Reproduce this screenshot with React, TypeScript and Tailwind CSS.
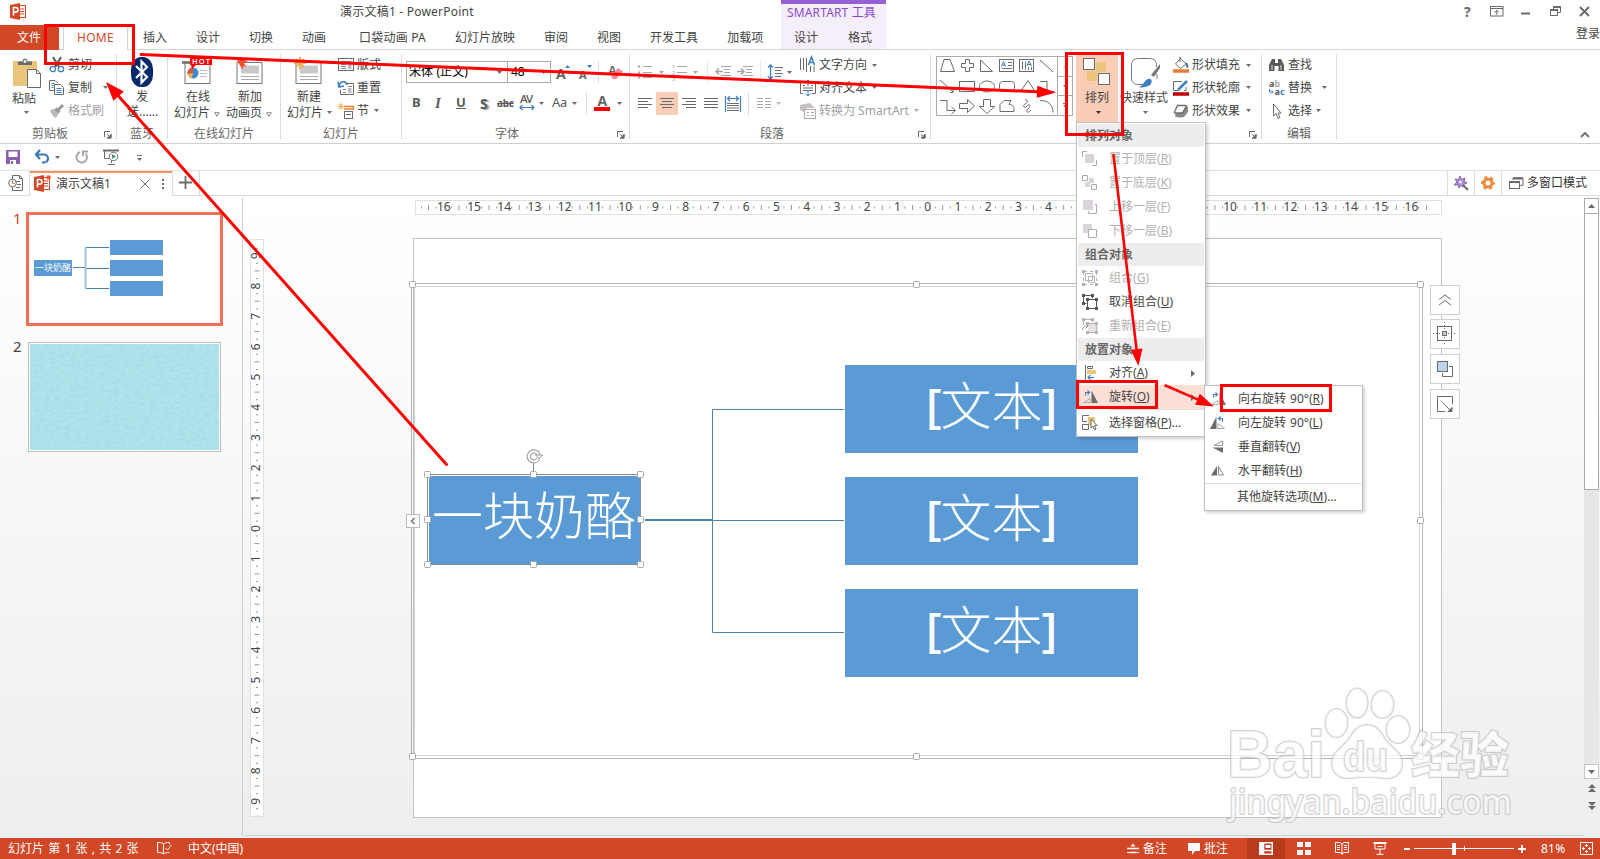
import React from "react";

type Kids = { children?: React.ReactNode };

const G = "#6b6b6b";
const BLUE = "#3f7fc1";

function Svg({ w = 16, h = 16, className = "", children }: { w?: number; h?: number; className?: string } & Kids) {
  return (
    <svg width={w} height={h} viewBox={`0 0 ${w} ${h}`} fill="none" stroke={G} strokeWidth={1} className={`shrink-0 overflow-visible ${className}`}>
      {children}
    </svg>
  );
}

function Caret({ className = "", color = "#6b6b6b" }: { className?: string; color?: string }) {
  return (
    <svg width="5" height="3" viewBox="0 0 5 3" className={`shrink-0 ${className}`}>
      <path d="M0 0h5L2.5 3z" fill={color} />
    </svg>
  );
}

function HollowCaret() {
  return (
    <svg width="6" height="5" viewBox="0 0 6 5" className="ml-1 mt-1 shrink-0">
      <path d="M.7.7h4.6L3 4.3z" fill="none" stroke="#6b6b6b" strokeWidth=".8" />
    </svg>
  );
}

/* ---------- title bar and tabs ---------- */

function PptLogo({ dot = false }: { dot?: boolean }) {
  return (
    <Svg w={17} h={17}>
      <rect x="8" y="2.5" width="7.5" height="12" fill="#fff" stroke="#d24726" />
      <path d="M10 6h4M10 8.5h4M10 11h4" stroke="#d24726" />
      <path d="M0 2l10-2v17L0 15z" fill="#d24726" stroke="none" />
      <path d="M3.5 12.5v-8h2.2a2.2 2.2 0 010 4.6H3.5" stroke="#fff" strokeWidth="1.6" />
      {dot && <circle cx="14.5" cy="2.5" r="2.3" fill="#ff5a1f" stroke="none" />}
    </Svg>
  );
}

function TitleArea() {
  const tab = "shrink-0 whitespace-nowrap leading-[26px]";
  return (
    <header className="flex h-[50px] shrink-0 border-b border-[#d4d4d4] text-[#444]">
      <div className="flex w-[781px] shrink-0 flex-col">
        <div className="flex h-[25px] items-center">
          <div className="ml-[10px] -mt-[2px] w-[330px]"><PptLogo /></div>
          <span className="-mt-[1px] whitespace-nowrap tracking-[0.22px]">演示文稿1 - PowerPoint</span>
        </div>
        <nav className="flex h-[24px]">
          <div className="h-[25px] w-[59px] bg-[#d24726] pl-[17px] leading-[26px] text-white">文件</div>
          <div className="ml-[4px] mr-[15px] h-[25px] w-[65px] border-x border-[#d4d4d4] bg-white pl-[13px] leading-[25px] tracking-[0.25px] text-[#d24726]">HOME</div>
          <span className={tab}>插入</span>
          <span className={`ml-[29px] ${tab}`}>设计</span>
          <span className={`ml-[29px] ${tab}`}>切换</span>
          <span className={`ml-[29px] ${tab}`}>动画</span>
          <span className={`ml-[33px] w-[67px] tracking-[0.2px] ${tab}`}>口袋动画 PA</span>
          <span className={`ml-[29px] ${tab}`}>幻灯片放映</span>
          <span className={`ml-[29px] ${tab}`}>审阅</span>
          <span className={`ml-[29px] ${tab}`}>视图</span>
          <span className={`ml-[29px] ${tab}`}>开发工具</span>
          <span className={`ml-[29px] ${tab}`}>加载项</span>
        </nav>
      </div>
      <div className="h-[49px] w-[105px] shrink-0 border-t-4 border-[#9460d6] bg-[#f5effc]">
        <div className="h-[21px] pl-[6px] leading-[18px] tracking-[0.15px] text-[#8c48cf]">SMARTART 工具</div>
        <div className="flex h-[24px] leading-[25px]">
          <span className="ml-[13px]">设计</span>
          <span className="ml-[30px]">格式</span>
        </div>
      </div>
      <div className="flex flex-1 flex-col items-end">
        <div className="flex h-[23px] items-center pr-[10px]">
          <span className="mr-[17px] w-[9px] text-[14px] font-bold leading-[22px] text-[#666]">?</span>
          <Svg w={14} h={11} className="mr-[17px]">
            <rect x=".5" y=".5" width="12.500" height="9.500" /><path d="M.5 2.500h12.500M6.800 9V4.500M4.500 6.500l2.300-2.200L9 6.500" />
          </Svg>
          <Svg w={10} h={10} className="mr-[19px]"><path d="M0 6.500h9" strokeWidth="2" /></Svg>
          <Svg w={11} h={11} className="mr-[18px]">
            <path d="M3.500 3V.5h7v6H8" /><path d="M3 1.200h8M0 4.200h8" strokeWidth="1.600" /><rect x=".5" y="3.500" width="7" height="6" />
          </Svg>
          <Svg w={11} h={11}><path d="M1 1l9 9M10 1l-9 9" strokeWidth="2" /></Svg>
        </div>
        <span className="leading-[22px]">登录</span>
      </div>
    </header>
  );
}

/* ---------- ribbon ---------- */

function Group({ className, label, labelClass = "", launcher = false, children }: { className: string; label?: string; labelClass?: string; launcher?: boolean } & Kids) {
  return (
    <section className={`flex h-[85px] shrink-0 flex-col border-r border-[#dcdcdc] ${className}`}>
      <div className="flex h-[73px]">{children}</div>
      <div className="flex h-[12px] items-center text-[#666]">
        <span className={`leading-[12px] pt-[2px] whitespace-nowrap ${labelClass}`}>{label}</span>
        {launcher && (
          <Svg w={8} h={8} className="ml-auto mr-[4px] mt-[3px]">
            <path d="M.5 6V.5H6M3 3l3 3M7 3v4H3" /><path d="M7 3.500V7H3.500z" fill={G} />
          </Svg>
        )}
      </div>
    </section>
  );
}

function Row({ icon, text, caret, gap = "ml-[5px]", dim = false, first = false }: { icon: React.ReactNode; text: string; caret?: boolean; gap?: string; dim?: boolean; first?: boolean }) {
  return (
    <div className={`flex items-center ${first ? "h-[22px]" : "h-[23px]"} ${dim ? "text-[#a0a0a0]" : ""}`}>
      <span className="flex w-[19px] shrink-0">{icon}</span>
      <span className="whitespace-nowrap leading-[20px]">{text}</span>
      {caret && <Caret className={gap} color={dim ? "#b0b0b0" : "#6b6b6b"} />}
    </div>
  );
}

function SlideIcon({ kind }: { kind: "hot" | "add" | "new" }) {
  return (
    <Svg w={30} h={28}>
      <rect x="2" y="5.500" width="25" height="21" fill="#fff" stroke="#777" />
      {kind !== "hot" && <><path d="M6 12.500h18" stroke="#c9c9c9" strokeWidth="8" /><path d="M6 19.500h18M6 22.500h18" stroke="#aaa" /></>}
      {kind === "hot" && (
        <>
          <path d="M-1 5.500h8" strokeWidth="2.500" />
          <circle cx="10" cy="16" r="5.500" fill="#3f8ac6" stroke="none" />
          <path d="M10 16V10.500A5.500 5.500 0 004.600 17z" fill="#e05436" stroke="none" />
          <path d="M10 16l-5.400 1a5.500 5.500 0 004 4.300z" fill="#f0b35a" stroke="none" />
          <path d="M17 13.500h7M17 16.500h7M17 19.500h7" stroke="#bbb" />
          <path d="M9 8h-1l1 4 4-4z" fill="#f00" stroke="none" />
          <rect x="7" y="0" width="22" height="8" fill="#f00" stroke="none" />
          <text x="18.500" y="6.800" textAnchor="middle" fontSize="7.500" fontWeight="600" letterSpacing="1.200" fill="#fff" stroke="none">HOT</text>
        </>
      )}
      {kind === "add" && <path d="M1 1l12 3-4 2 2 4-3-1 0 4-4-6z" fill="#f4502c" stroke="none" />}
      {kind === "new" && <path d="M6 0v12M0 6h12M2 2l8 8M10 2l-8 8" stroke="#efb45a" strokeWidth="2" />}
    </Svg>
  );
}

const grayLines = (ws: number[][]) => ws.map(([x1, x2], i) => <path key={i} d={`M${x1} ${i * 3 + 1.5}H${x2}`} stroke="#6b6b6b" />);

function Sep({ className = "" }: { className?: string }) {
  return <i className={`h-[22px] w-px shrink-0 bg-[#dcdcdc] ${className}`} />;
}

function ShapesGallery() {
  return (
    <div className="ml-[5px] mt-[2px] flex h-[60px] w-[137px] shrink-0 border border-[#ababab]">
      <div className="w-[121px] border-r border-[#ababab]">
        <Svg w={121} h={58}>
          <path d="M3.500 14.500L7 2.500h6l4.500 12zM28.500 2.500h4v4h4v4h-4v4h-4v-4h-4v-4h4zM43.500 3v11.500h12zM103 3l13 12" />
          <rect x="62.500" y="2.500" width="14" height="12" /><path d="M71 5.500h4M71 8.500h4M65 11.500h10" />
          <path d="M64.500 9.500l2-5 2 5M65 8h3" stroke={BLUE} />
          <rect x="82.500" y="2.500" width="14" height="12" /><path d="M85.500 4.500v8M88.500 4.500v8M91.500 10v3M94.500 10v3" />
          <path d="M90 9l2-5 2.500 5M91 7.500h3" stroke={BLUE} />
          <path d="M3 23l13 12M13 35.500h3v-4" />
          <rect x="22.500" y="24.500" width="15" height="10" /><ellipse cx="50" cy="29.500" rx="7.500" ry="5.500" /><rect x="62.500" y="24.500" width="15" height="10" rx="3" />
          <path d="M83.500 34.500L91 23.500l7 11zM103 24.500h7v10h7" />
          <path d="M3 43.500h7v10h8M14.500 50l4 3.500-4 3.500" />
          <path d="M22.500 46.500h8v-4l7 6.500-7 6.500v-4h-8zM46.500 42.500h7v7h4l-7.500 7-7.500-7h4zM63 54.500v-7l4-4h7l-2 4c5 0 5 3 5 7z" />
          <path d="M88 43c6 0 0 4-1 5s0 4 3 1 4 0 1 3 0 5 3 1M103 43.500c8 0 13 4 13 12" />
        </Svg>
      </div>
      <div className="flex flex-1 flex-col">
        <div className="flex flex-1 items-center justify-center border-b border-[#ababab]"><Caret className="rotate-180" color="#bbb" /></div>
        <div className="flex flex-1 items-center justify-center border-b border-[#ababab]"><Caret /></div>
        <div className="flex flex-1 flex-col items-center justify-center gap-[1px]"><i className="h-px w-[5px] bg-[#6b6b6b]" /><Caret /></div>
      </div>
    </div>
  );
}

function Ribbon() {
  return (
    <div className="flex h-[94px] shrink-0 border-b border-[#d0d0d0] pt-[4px] text-[#444]">
      <Group className="w-[117px]" label="剪贴板" labelClass="ml-[32px]" launcher>
        <div className="ml-[12px] flex w-[30px] flex-col">
          <Svg w={30} h={31} className="mt-[4px]">
            <path d="M1 3h24v25H1z" fill="#ecc57d" stroke="none" />
            <path d="M6 7V3.500h4.500C10.500-.5 15.500-.5 15.500 3.500H20V7z" fill="#6b6b6b" stroke="none" /><circle cx="13" cy="3.500" r="1.400" fill="#fff" stroke="none" />
            <path d="M15.500 11.500h9l4 4v14h-13z" fill="#fff" /><path d="M24.500 11.500v4h4" />
          </Svg>
          <span className="mt-[2px] leading-[16px]">粘贴</span>
          <Caret className="ml-[12px] mt-[4px]" />
        </div>
        <div className="ml-[7px] flex flex-col">
          <Row first text="剪切" icon={<Svg><path d="M4 0l6 10M12 0L6 10" stroke="#555" strokeWidth="2" /><circle cx="3.800" cy="12" r="2.700" stroke={BLUE} strokeWidth="1.300" /><circle cx="12" cy="12" r="2.700" stroke={BLUE} strokeWidth="1.300" /></Svg>} />
          <Row text="复制" caret gap="ml-[11px]" icon={<Svg><path d="M7 10.500H.5v-10H6L8.500 3" /><path d="M2.500 3.500h3M2.500 5.500h2M2.500 7.500h2" stroke={BLUE} /><path d="M5.500 4.500h6l3 3v7h-9z" fill="#fff" /><path d="M7.500 8.500h5M7.500 10.500h5M7.500 12.500h5" stroke={BLUE} /></Svg>} />
          <Row dim text="格式刷" icon={<Svg><path d="M1 7l5-1 4 4-3 5C5 14 2 11 1 7z" fill="#b9b9b9" stroke="none" /><path d="M6.500 5.500l4 4M9 7l5-5" stroke="#999" strokeWidth="3" /></Svg>} />
        </div>
      </Group>

      <Group className="w-[51px]" label="蓝牙" labelClass="ml-[13px]">
        <div className="ml-[10px] flex w-[38px] flex-col">
          <Svg w={22} h={30} className="ml-[4px] mt-[3px]">
            <rect width="22" height="30" rx="10" ry="12" fill="#03286b" stroke="none" />
            <path d="M5 9l11 11-5.500 5.500v-21L16 10 5 21" stroke="#fff" strokeWidth="2.200" />
          </Svg>
          <span className="mt-[2px] pl-[9px] leading-[16px]">发</span>
          <span className="whitespace-nowrap leading-[14px]">送......</span>
        </div>
      </Group>

      <Group className="w-[113px]" label="在线幻灯片" labelClass="ml-[26px]">
        <div className="ml-[6px] flex w-[52px] flex-col">
          <div className="ml-[9px] mt-[3px] h-[32px]"><SlideIcon kind="hot" /></div>
          <span className="pl-[12px] leading-[16px]">在线</span>
          <span className="flex items-center leading-[15px]">幻灯片<HollowCaret /></span>
        </div>
        <div className="flex w-[52px] flex-col">
          <div className="ml-[9px] mt-[3px] h-[32px]"><SlideIcon kind="add" /></div>
          <span className="pl-[12px] leading-[16px]">新加</span>
          <span className="flex items-center leading-[15px]">动画页<HollowCaret /></span>
        </div>
      </Group>

      <Group className="w-[121px]" label="幻灯片" labelClass="ml-[42px]">
        <div className="ml-[6px] flex w-[51px] flex-col">
          <div className="ml-[7px] mt-[3px] h-[32px]"><SlideIcon kind="new" /></div>
          <span className="pl-[10px] leading-[16px]">新建</span>
          <span className="flex items-center leading-[15px]">幻灯片<Caret className="ml-[4px]" /></span>
        </div>
        <div className="flex flex-col">
          <Row first text="版式" icon={<Svg><rect x=".5" y="1.500" width="15" height="12" /><path d="M3 4.500h10M3 7.500h5M3 9.500h5M3 11.500h5" stroke="#888" /><path d="M10 7h3.500v5H10z" fill="#bbb" stroke="none" /></Svg>} />
          <Row text="重置" icon={<Svg><path d="M8 3.500h7.500v11h-13V10" /><path d="M10 6.500h4M5 9.500h3M5 12.500h3" stroke="#888" /><path d="M10 8h3.500v5H10z" fill="#bbb" stroke="none" /><path d="M1 6.500C2 1 8 0 9 5M0 2l1 5 5-1" stroke={BLUE} strokeWidth="1.600" /></Svg>} />
          <Row text="节" caret icon={<Svg><path d="M3 0v7M0 3.500h7M1 1l4 5M5 1L1 6" stroke="#efb45a" /><path d="M6 3.500h9.500V6H6" stroke="#ef8236" strokeWidth="1.400" /><rect x="6.500" y="8.500" width="8" height="7" /><path d="M8 11.500h5" /></Svg>} />
        </div>
      </Group>

      <Group className="w-[228px]" label="字体" labelClass="ml-[93px]" launcher>
        <div className="flex flex-col">
          <div className="ml-[4px] mt-[7px] flex h-[22px] items-center">
            <div className="flex h-[22px] w-[102px] items-center border border-[#ababab] pl-[2px] leading-[20px] text-black"><span className="w-[88px] tracking-[0.1px]">宋体 (正文)</span><Caret /></div>
            <div className="-ml-px flex h-[22px] w-[44px] items-center border border-[#ababab] pl-[3px] text-[12px] leading-[20px] text-black"><span className="w-[30px]">48</span><Caret /></div>
            <Svg w={15} h={15} className="ml-[5px]"><text x="0" y="14" fontSize="14" fontWeight="bold" fill="#666" stroke="none">A</text><path d="M9 3l2.500-3L14 3z" fill={BLUE} stroke="none" /></Svg>
            <Svg w={15} h={15} className="ml-[7px]"><text x="1" y="14" fontSize="11" fontWeight="bold" fill="#666" stroke="none">A</text><path d="M9 0l2.500 3L14 0z" fill={BLUE} stroke="none" /></Svg>
            <Sep className="ml-[5px]" />
            <Svg w={15} h={17} className="ml-[9px]"><text x="0" y="11" fontSize="13" fontWeight="600" fill="#666" stroke="none">A</text><path d="M3 12l7-8 5 3.500-7 7.500-3 0z" fill="#f08a9b" stroke="none" /></Svg>
          </div>
          <div className="ml-[5px] mt-[9px] flex h-[22px] items-center text-[13px] text-[#5a5a5a]">
            <b className="w-[22px] pl-[5px]">B</b>
            <b className="w-[22px] pl-[6px] font-['Liberation_Serif'] text-[15px] italic">I</b>
            <b className="w-[22px] pl-[5px] underline">U</b>
            <b className="w-[24px] pl-[7px] text-[14px] [text-shadow:2px_1px_1px_#999]">S</b>
            <span className="w-[22px] text-[10px] font-bold tracking-tight line-through">abc</span>
            <Svg w={17} h={16}><text x="1" y="8" fontSize="11.500" fontWeight="500" fill="#555" stroke="none" textLength="13">AV</text><path d="M1 12.500h14M3.500 10L1 12.500 3.500 15M12.500 10l2.500 2.500-2.500 2.500" stroke={BLUE} strokeWidth="1.200" /></Svg>
            <Caret className="ml-[3px]" />
            <span className="ml-[8px] w-[20px] tracking-[-0.3px]">Aa</span>
            <Caret />
            <Sep className="ml-[9px]" />
            <Svg w={17} h={16} className="ml-[7px]"><text x="3.500" y="10.500" fontSize="14" fontWeight="bold" fill="#666" stroke="none">A</text><path d="M0 14h16" stroke="#f00" strokeWidth="4" /></Svg>
            <Caret className="ml-[6px]" />
          </div>
        </div>
      </Group>

      <Group className="w-[301px]" label="段落" labelClass="ml-[130px]" launcher>
        <div className="flex w-[170px] flex-col">
          <div className="ml-[8px] mt-[7px] flex h-[22px] items-center opacity-60">
            <Svg w={14} h={14}><path d="M0 1.500h2M0 7.500h2M0 12.500h2" strokeWidth="2" /><path d="M5 1.500h9M5 7.500h9M5 12.500h9" /></Svg>
            <Caret className="ml-[7px]" />
            <Svg w={15} h={16} className="ml-[8px]"><text x="0" y="5" fontSize="6" fill={G} stroke="none">1</text><text x="0" y="11" fontSize="6" fill={G} stroke="none">2</text><text x="0" y="17" fontSize="6" fill={G} stroke="none">3</text><path d="M5 2.500h10M5 8.500h10M5 13.500h10" /></Svg>
            <Caret className="ml-[6px]" />
            <Sep className="ml-[9px]" />
            <Svg w={16} h={12} className="ml-[7px]"><path d="M6 .5h10M9 3.500h6M9 6.500h6M6 9.500h10" /><path d="M1 5.500h7M4 2.500l-3 3 3 3" strokeWidth="1.600" /></Svg>
            <Svg w={16} h={12} className="ml-[6px]"><path d="M6 .5h10M9 3.500h6M9 6.500h6M6 9.500h10" /><path d="M0 5.500h7M4 2.500l3 3-3 3" strokeWidth="1.600" /></Svg>
            <Sep className="ml-[7px]" />
          </div>
          <div className="ml-[8px] mt-[9px] flex h-[23px] items-center">
            <Svg w={14} h={13}>{grayLines([[0, 14], [0, 10], [0, 14], [0, 10]])}</Svg>
            <span className="ml-[4px] flex h-[23px] w-[22px] items-center justify-center bg-[#fbcdb7]"><Svg w={14} h={13}>{grayLines([[0, 14], [2, 12], [0, 14], [2, 12]])}</Svg></span>
            <Svg w={14} h={13} className="ml-[4px]">{grayLines([[0, 14], [4, 14], [0, 14], [4, 14]])}</Svg>
            <Svg w={14} h={13} className="ml-[8px]">{grayLines([[0, 14], [0, 14], [0, 14], [0, 14]])}</Svg>
            <Svg w={16} h={16} className="ml-[7px]"><path d="M.5 0v16M15.500 0v16M2 2.500h12M5 0L2.500 2.500 5 5M11 0l2.500 2.500L11 5" stroke={BLUE} strokeWidth="1.200" /><path d="M2 7.500h12M2 9.500h12M2 12h12M2 14.500h12" /></Svg>
            <Sep className="ml-[7px]" />
            <Svg w={14} h={13} className="ml-[8px] opacity-60"><path d="M0 1.500h6M0 4.500h6M0 7.500h6M0 10.500h6M8 1.500h6M8 4.500h6M8 7.500h6M8 10.500h6" /></Svg>
            <Caret className="ml-[5px]" color="#bbb" />
          </div>
        </div>
        <div className="-ml-[32px] mt-[10px] flex h-[16px] items-center">
          <Svg w={15} h={16}><path d="M2.500 1v14M0 3.500L2.500 1 5 3.500M0 12.500L2.500 15 5 12.500" stroke={BLUE} strokeWidth="1.300" /><path d="M7 3.500h8M7 6.500h6M7 9.500h8M7 12.500h6" /></Svg>
          <Caret className="ml-[4px]" />
        </div>
        <div className="ml-[8px] flex flex-col">
          <Row first text="文字方向" caret icon={<Svg><path d="M.5 1v12M3.500 1v12M6.500 1v14M10.500 9v6M14 9v6" /><path d="M8.500 8L11.500 0l3 8M9.500 5.500h4" stroke={BLUE} strokeWidth="1.500" /></Svg>} />
          <Row text="对齐文本" caret icon={<Svg><path d="M3 2.500H.5v11H3M12 2.500h3.500v11H12M3 5.500h2M11 5.500h2M3 8h10M3 10.500h10" /><path d="M8 0v6M5.500 2.500L8 0l2.500 2.500M8 10v6M5.500 13.500L8 16l2.500-2.500" stroke={BLUE} /></Svg>} />
          <Row dim text="转换为 SmartArt" caret icon={<Svg><path d="M0 2l10-2 5 5H7l-3 4-4-2z" fill="#c4c0c4" stroke="none" /><rect x="4.500" y="6.500" width="11" height="9" fill="#fff" stroke="#aaa" /><path d="M7 9.500h2M11 9.500h3M7 12.500h2M11 12.500h3" stroke="#aaa" /></Svg>} />
        </div>
      </Group>

      <Group className="w-[331px]" launcher>
        <ShapesGallery />
        <div className="ml-[3px] flex h-[68px] w-[42px] flex-col bg-[#fbcdb7] pt-[4px]">
          <Svg w={28} h={28} className="ml-[7px]">
            <path d="M13 4h10v10H13zM4 13h10v10H4z" fill="#ecc57d" stroke="none" />
            <rect x=".5" y=".5" width="11" height="11" fill="#fff" /><rect x="15.500" y="15.500" width="11" height="11" fill="#fff" />
          </Svg>
          <span className="ml-[9px] mt-[4px] leading-[16px]">排列</span>
          <Caret className="ml-[20px] mt-[5px]" color="#333" />
        </div>
        <div className="ml-[2px] flex w-[50px] flex-col pt-[4px]">
          <Svg w={30} h={30} className="ml-[11px]">
            <path d="M14 26.500H6.500a6 6 0 01-6-6v-14a6 6 0 016-6h13a6 6 0 016 6V9M26 16v5" stroke="#777" />
            <path d="M29 6L20 17l3 2 6-9z" fill="#777" stroke="none" /><path d="M7 29c5 0 6-7 10-8 4-1 5 3 2 6-3 2-8 3-12 2z" fill={BLUE} stroke="none" />
          </Svg>
          <span className="mt-[2px] whitespace-nowrap leading-[16px]">快速样式</span>
          <Caret className="ml-[23px] mt-[5px]" />
        </div>
        <div className="ml-[3px] flex flex-col">
          <Row first text="形状填充" caret gap="ml-[6px]" icon={<Svg><path d="M7 2L2.500 7l5 4.500L13 7 7 1V0v5" fill="#fff" /><path d="M13 5c2 2 3 3 2 6-2 0-2-2-2-6z" fill={BLUE} stroke="none" /><path d="M0 14h16" stroke="#ed7d31" strokeWidth="3.500" /></Svg>} />
          <Row text="形状轮廓" caret gap="ml-[6px]" icon={<Svg><path d="M9 1.500H.5v9h5M13 7v3.500h-2" /><path d="M5 10l9-9" stroke={BLUE} strokeWidth="2.500" /><path d="M0 14h16" stroke="#c00000" strokeWidth="3.500" /></Svg>} />
          <Row text="形状效果" caret gap="ml-[6px]" icon={<Svg><path d="M4 3h9.500q1.500 0 1.500 2v4l-4 5q-5 1-9-.5z" fill="#888" stroke="none" /><path d="M4.500 2.500h8q1 0 .5 1L9.500 10H2q-1 0-.5-1z" fill="#fff" strokeWidth="1.300" /></Svg>} />
        </div>
      </Group>

      <Group className="w-[75px]" label="编辑" labelClass="ml-[25px]">
        <div className="ml-[7px] flex flex-col">
          <Row first text="查找" icon={<Svg><path d="M0 14V8l3-6h3v4h3V2h3l3 6v6H9.500V9h-4v5z" fill="#5a5a5a" stroke="none" /><path d="M3 8v5M12 8v5" stroke="#ddd" /></Svg>} />
          <Row text="替换" caret gap="ml-[10px]" icon={<Svg><text x="0" y="7" fontSize="9" fontWeight="bold" fill="#555" stroke="none">a<tspan fill="#aaa">b</tspan></text><text x="5.500" y="15" fontSize="9" fontWeight="bold" fill="#555" stroke="none">a<tspan fill={BLUE}>c</tspan></text><path d="M.5 9v3h3M2.500 10.500L4 12l-1.500 1.500" stroke={BLUE} /></Svg>} />
          <Row text="选择" caret gap="ml-[4px]" icon={<Svg><path d="M4.500 1v12l2.500-2.500 2 5 2-1-2-4.500h3z" fill="#fff" /></Svg>} />
        </div>
      </Group>
      <div className="flex flex-1 items-end justify-end pb-[5px] pr-[10px]">
        <Svg w={10} h={6}><path d="M1 5l4-4 4 4" strokeWidth="1.800" /></Svg>
      </div>
    </div>
  );
}

/* ---------- quick access and document tabs ---------- */

function QuickAccess() {
  return (
    <div className="flex h-[27px] shrink-0 items-center border-b border-[#e0e0e0]">
      <Svg w={14} h={14} className="ml-[6px]"><path d="M0 0h14v14H0z" fill="#8a5fb0" stroke="none" /><path d="M2.500 1.500h9V7h-9zM4 10h6v4H4z" fill="#fff" stroke="none" /><path d="M5 11h2v3H5z" fill="#8a5fb0" stroke="none" /></Svg>
      <Svg w={15} h={14} className="ml-[15px]"><path d="M5 0L1 4.500 5 9M1 4.500h8a4 4 0 010 8H7" stroke="#3b78b8" strokeWidth="2.200" /></Svg>
      <Caret className="ml-[5px]" />
      <Svg w={14} h={14} className="ml-[15px]"><path d="M5 2.200a5.300 5.300 0 105.500 1.300M8 6V1.500h5" stroke="#a6a6a6" strokeWidth="1.900" /></Svg>
      <Svg w={17} h={16} className="ml-[14px]"><path d="M0 1.500h16" strokeWidth="2" /><path d="M1.500 2v7.500H6M8.500 10v4M5 15.500h7" /><circle cx="10.500" cy="7.500" r="4.300" fill="#fff" /><path d="M9 5l4 2.500L9 10z" fill="#3f9c76" stroke="none" /></Svg>
      <div className="ml-[17px] mt-[2px] flex flex-col gap-[2px]"><i className="h-px w-[5px] bg-[#6b6b6b]" /><Caret /></div>
    </div>
  );
}

function DocTabs() {
  return (
    <div className="flex h-[25px] shrink-0 text-[#444]">
      <div className="flex w-[30px] items-center border-b border-r border-[#dcdcdc] pl-[8px]">
        <Svg w={16} h={16}><path d="M4.500 4V.5h7l3 3v12h-10V12" fill="#fff" /><path d="M11.500.5v3h3M8 6.500h4M9 9.500h4M8 12.500h4" /><circle cx="4.500" cy="8" r="3.800" fill="#fff" /><path d="M4.500 5.500V8.500h2" stroke="#e0703c" /></Svg>
      </div>
      <div className="flex w-[142px] items-center border-t-2 border-[#f09468] pb-[2px] pl-[4px]">
        <PptLogo dot />
        <span className="ml-[5px] w-[84px] leading-[20px]">演示文稿1</span>
        <Svg w={10} h={10}><path d="M.5.500l9 9M9.500.500l-9 9" /></Svg>
        <Svg w={4} h={12} className="ml-[11px]"><path d="M2 1v2M2 5v2M2 9v2" strokeWidth="2" /></Svg>
      </div>
      <div className="flex w-[28px] items-center border-x border-b border-[#dcdcdc] pb-[1px] pl-[6px]"><Svg w={13} h={13}><path d="M6.500 0v13M0 6.500h13" strokeWidth="1.800" /></Svg></div>
      <div className="flex flex-1 items-center justify-end border-b border-[#dcdcdc]">
        <div className="flex h-[24px] w-[27px] items-center justify-center border-l border-[#dcdcdc] pr-[1px]">
          <Svg><path d="M7 1l1.500 3.500L12 3l-1 3.500L14 8l-3.500 1.500L11 12 8 10.500 6 13l-.5-3L1 10l3-3-2-3 3.500.5z" fill="#b48ae0" stroke="#7d6a98" /><circle cx="7.500" cy="7" r="1.500" fill="#eee" stroke="none" /><path d="M10 10l5 5" strokeWidth="2" /></Svg>
        </div>
        <div className="flex h-[24px] w-[27px] items-center justify-center border-l border-[#dcdcdc]">
          <Svg w={14} h={14}><circle cx="7" cy="7" r="4" stroke="#ee8a3c" strokeWidth="3" /><circle cx="7" cy="7" r="6" stroke="#ee8a3c" strokeWidth="2" strokeDasharray="3.140 3.140" strokeDashoffset="1.500" /></Svg>
        </div>
        <div className="flex h-[24px] w-[99px] items-center border-l border-[#dcdcdc] pl-[7px]">
          <Svg w={15} h={13}><path d="M4 3V.8h10v7.500h-3" /><path d="M4 1.500h10" strokeWidth="2" /><rect x=".5" y="4.500" width="10" height="7" /><path d="M0 5h11" strokeWidth="2" /></Svg>
          <span className="ml-[3px] leading-[20px] text-[#333]">多窗口模式</span>
        </div>
      </div>
    </div>
  );
}

/* ---------- workspace ---------- */

function Thumbnails() {
  return (
    <aside className="mt-[2px] flex h-[638px] w-[243px] shrink-0 flex-col border-r border-[#cfcfcf] pt-[14px]">
      <div className="flex h-[130px]">
        <span className="w-[26px] pl-[13px] text-[15px] leading-[13px] text-[#d24726]">1</span>
        <div className="h-[114px] w-[197px] border-[3px] border-[#f07055] bg-white">
          <div className="flex h-full pl-[5px] pt-[25px]">
            <div className="mt-[20px] flex h-[16px] w-[38px] items-center justify-center bg-[#5b9bd5] text-[9px] leading-[14px] text-white">一块奶酪</div>
            <Svg w={38} h={56}><path d="M1 27.500h12M13 7.500h24M13 28.500h24M13 48.500h24" stroke="#4a80b0" /><path d="M13.500 7v42" stroke="#a9c0dc" strokeWidth="2" /></Svg>
            <div className="flex flex-col gap-[5px]">
              <i className="h-[15px] w-[53px] bg-[#5b9bd5]" /><i className="h-[16px] w-[53px] bg-[#5b9bd5]" /><i className="h-[15px] w-[53px] bg-[#5b9bd5]" />
            </div>
          </div>
        </div>
      </div>
      <div className="flex">
        <span className="w-[28px] pl-[13px] text-[15px] leading-[8px] text-[#444]">2</span>
        <div className="h-[110px] w-[193px] border border-[#bfbfbf] bg-white p-[1px]">
          <svg width="189" height="106">
            <filter id="weave"><feTurbulence type="fractalNoise" baseFrequency="0.2 0.35" numOctaves="2" seed="4" /><feColorMatrix values="0 0 0 0 0.35  0 0 0 0 0.68  0 0 0 0 0.78  1.500 0 0 0 -0.560" /></filter>
            <rect width="189" height="106" fill="#b0e4ea" /><rect width="189" height="106" filter="url(#weave)" />
          </svg>
        </div>
      </div>
    </aside>
  );
}

function HRuler() {
  const marks = Array.from({ length: 33 }, (_, i) => i - 16);
  return (
    <svg width="1027" height="15" className="ml-[172px] mt-[4px] shrink-0 border border-[#e0e0e0] bg-white">
      {marks.map((m) => {
        const x = 511.600 + m * 30.240;
        return (
          <g key={m}>
            <text x={x} y="10.300" textAnchor="middle" fontSize="12" fill="#444">{Math.abs(m)}</text>
            <path d={`M${x - 7.500} 5.500v2M${x + 7.500} 5.500v2M${x + 15.100} 4v5`} stroke="#999" />
          </g>
        );
      })}
      <path d="M12.500 4v5M5.500 5.500v2" stroke="#999" />
    </svg>
  );
}

function VRuler() {
  const marks = Array.from({ length: 19 }, (_, i) => i - 9);
  return (
    <svg width="14" height="578" className="ml-[7px] mt-[24px] shrink-0 border border-[#e0e0e0] bg-white">
      {marks.map((m) => {
        const y = 288.500 + m * 30.300;
        return (
          <g key={m}>
            <text transform={`translate(9 ${y}) rotate(-90)`} textAnchor="middle" fontSize="12" fill="#444">{Math.abs(m)}</text>
            <path d={`M5 ${y - 7.500}h2M5 ${y + 7.500}h2M3.500 ${y + 15.100}h5`} stroke="#999" />
          </g>
        );
      })}
    </svg>
  );
}

function Handle({ x, y }: { x: number; y: number }) {
  return <rect x={x - 3} y={y - 3} width="6" height="6" rx="1" fill="#fff" stroke="#a8a8a8" />;
}

function TextNode({ className }: { className: string }) {
  return (
    <div className={`absolute left-[431px] flex h-[88px] w-[293px] justify-center bg-[#5b9bd5] text-[51px] font-light leading-[80px] text-white ${className}`}>
      <span className="-mr-[1px] text-[48px] font-medium">[</span><span>文本</span><span className="-ml-[1px] text-[48px] font-medium">]</span>
    </div>
  );
}

function Slide() {
  const btn = "absolute left-[1016px] flex size-[30px] items-center justify-center border border-[#d0d0d0] bg-white";
  return (
    <div className="relative ml-[149px] mt-[23px] h-[580px] w-[1029px] shrink-0 border border-[#c3c3c3] bg-white">
      <TextNode className="top-[126px]" />
      <TextNode className="top-[238px]" />
      <TextNode className="top-[350px]" />
      <div className="absolute left-[15px] top-[237px] h-[88px] w-[212px] bg-[#5b9bd5] pl-[3px] text-[51px] font-light leading-[78px] text-white"><span className="whitespace-nowrap">一块奶酪</span></div>
      <svg width="1040" height="560" viewBox="400 230 1040 560" fill="none" className="absolute -left-[14px] -top-[9px]">
        <path d="M645 520h67" stroke="#4a80b4" strokeWidth="2" />
        <path d="M844 409.500H712.500v223H844M712 520.500h132" stroke="#4a80b4" />
        <rect x="411.500" y="283.500" width="1011" height="475" stroke="#b4b4b4" />
        <rect x="414.500" y="286.500" width="1005" height="469" stroke="#d0d0d0" />
        <Handle x={412.500} y={284.500} /><Handle x={916.500} y={284.500} /><Handle x={1420.500} y={284.500} /><Handle x={1420.500} y={520.500} />
        <Handle x={412.500} y={756.500} /><Handle x={916.500} y={756.500} /><Handle x={1420.500} y={756.500} />
        <rect x="406.500" y="514.500" width="13" height="13" fill="#fff" stroke="#bbb" />
        <path d="M414.500 518l-3 3 3 3" stroke="#777" strokeWidth="1.500" />
        <rect x="427.500" y="474.500" width="213" height="90" stroke="#8c8c8c" />
        <path d="M533.500 462v13" stroke="#888" />
        <path d="M538 459a5 5 0 11.500-4" stroke="#999" strokeWidth="4.200" /><path d="M538 459a5 5 0 11.500-4" stroke="#fff" strokeWidth="2.200" />
        <path d="M535.500 455h7l-3.500 4z" fill="#fff" stroke="#999" />
        {[427.500, 533.500, 640.500].map((x) => [474.500, 519.500, 564.500].map((y) => (x === 533.500 && y === 519.500 ? null : <Handle key={`${x}${y}`} x={x} y={y} />)))}
      </svg>
      <div className={`${btn} top-[46px]`}><Svg w={14} h={12}><path d="M1 5.500L7 1l6 4.500M1 11l6-4.500L13 11" /></Svg></div>
      <div className={`${btn} top-[80px]`}><Svg w={24} h={24}><rect x="4.500" y="4.500" width="14" height="14" /><rect x="9.500" y="9.500" width="4" height="4" fill="#ccc" /><path d="M11.500 0v9M11.500 15v9M0 11.500h9M15 11.500h9" strokeDasharray="1 2" /></Svg></div>
      <div className={`${btn} top-[115px]`}><Svg><rect x=".5" y=".5" width="10" height="10" fill="#bdd3ec" /><path d="M12 5.500h3.500v10h-10V12" /></Svg></div>
      <div className={`${btn} top-[150px]`}><Svg><path d="M8 15.500H.5V.5h15V8M5 6l8 8" /><path d="M15 11.500V15.500H11z" fill={G} /></Svg></div>
    </div>
  );
}

function ScrollBar() {
  return (
    <div className="mt-[2px] flex w-[15px] shrink-0 flex-col items-center">
      <div className="flex h-[16px] w-[15px] shrink-0 items-center justify-center border border-[#ababab] bg-white"><Svg w={7} h={4}><path d="M0 4h7L3.500 0z" fill={G} stroke="none" /></Svg></div>
      <div className="-mt-px h-[277px] w-[15px] shrink-0 border border-[#ababab] bg-white" />
      <div className="h-[274px] w-[15px] shrink-0 bg-[#e6e6e6]" />
      <div className="flex h-[15px] w-[15px] shrink-0 items-center justify-center border border-[#c6c6c6] bg-white"><Svg w={7} h={4}><path d="M0 0h7L3.500 4z" fill={G} stroke="none" /></Svg></div>
      <Svg w={8} h={9} className="mt-[5px]"><path d="M0 4h8L4 0zM0 8h8L4 4z" fill={G} stroke="none" /></Svg>
      <Svg w={8} h={9} className="mt-[9px]"><path d="M0 0h8L4 4zM0 4h8L4 8z" fill={G} stroke="none" /></Svg>
    </div>
  );
}

function Workspace() {
  return (
    <main className="flex h-[642px] shrink-0 bg-gradient-to-b from-white to-[#eeeeee]">
      <Thumbnails />
      <div className="flex w-[1341px] shrink-0 flex-col">
        <HRuler />
        <div className="flex h-[620px] shrink-0"><VRuler /><Slide /></div>
        <div className="ml-[2px] h-px bg-[#cfcfcf]" />
      </div>
      <ScrollBar />
    </main>
  );
}

function StatusBar() {
  return (
    <footer className="flex h-[21px] shrink-0 items-center bg-[#d24726] text-white">
      <span className="ml-[8px] w-[149px] whitespace-nowrap leading-[20px] [word-spacing:1.1px]">幻灯片 第 1 张 , 共 2 张</span>
      <Svg w={15} h={13}><path d="M6.500 12V2C5 .5 2.500.5.500.500v10c2 0 4.500 0 6 1.500 1-1 3-1.500 6-1.500M6.500 2C8 .5 10 .5 12.500.500v2M8.500 6l2 2 4-5" stroke="#fff" /></Svg>
      <span className="ml-[16px] leading-[20px]">中文(中国)</span>
      <div className="ml-auto flex h-[21px] items-center">
        <Svg w={12} h={11}><path d="M0 5.500h12M3 9.500h6" stroke="#fff" strokeWidth="1.300" /><path d="M0 9.500h12" stroke="#fff" /><path d="M3.500 3.500l2.500-3 2.500 3z" fill="#fff" stroke="none" /></Svg>
        <span className="ml-[4px] mr-[21px] leading-[20px]">备注</span>
        <Svg w={12} h={12}><path d="M0 0h12v8H7l-3 4V8H0z" fill="#fff" stroke="none" /></Svg>
        <span className="ml-[4px] mr-[19px] leading-[20px]">批注</span>
        <div className="flex h-[21px] w-[38px] items-center justify-center bg-[#b83b1d]">
          <Svg w={14} h={13}><path d="M.8.800h12.400v11.400H.8zM4.500 1v11M4.500 8.500H13" stroke="#fff" strokeWidth="1.500" /><path d="M1 1h3v11H1zM6.500 3h5v3h-5z" fill="#fff" stroke="none" /></Svg>
        </div>
        <Svg w={14} h={13} className="ml-[12px]"><path d="M0 0h6v5H0zM8 0h6v5H8zM0 8h6v5H0zM8 8h6v5H8z" fill="#fff" stroke="none" /></Svg>
        <Svg w={14} h={13} className="ml-[24px]"><path d="M7 1.500v11M.5.500H5L7 2 9 .5h4.500v10H9L7 12 5 10.500H.5zM2 3.500h3M2 5.500h3M2 7.500h3M9 3.500h3M9 5.500h3M9 7.500h3" stroke="#fff" /></Svg>
        <Svg w={14} h={13} className="ml-[24px]"><path d="M.5 1h13" stroke="#fff" strokeWidth="2" /><path d="M2 1.500v5.500h10V1.500M7 7v5M3.500 12.300h7M4.500 4.500h5" stroke="#fff" /></Svg>
        <i className="ml-[17px] h-[2px] w-[6px] bg-white" />
        <div className="ml-[4px] flex w-[100px] items-center">
          <i className="h-px w-[38px] bg-white" /><i className="h-[12px] w-[4px] bg-white" /><i className="h-px w-[8px] bg-white" /><i className="h-[5px] w-px bg-white" /><i className="h-px w-[49px] bg-white" />
        </div>
        <Svg w={8} h={8} className="ml-[4px]"><path d="M4 0v8M0 4h8" stroke="#fff" strokeWidth="2" /></Svg>
        <span className="ml-[15px] w-[39px] leading-[20px] tracking-[0.2px]">81%</span>
        <Svg w={13} h={13} className="mr-[7px]"><path d="M.5.500h12v12H.5z" stroke="#fff" /><path d="M6.500 2v3M6.500 8v3M2 6.500h3M8 6.500h3M5 3.500h3M5 9.500h3M3.500 5v3M9.500 5v3" stroke="#fff" /></Svg>
      </div>
    </footer>
  );
}

/* ---------- menus ---------- */

function MenuHead({ children }: Kids) {
  return <div className="mx-px h-[23px] bg-[#ededed] pl-[7px] font-bold leading-[24px] text-[#666]">{children}</div>;
}

function MenuItem({ icon, text, k, tail = "", dim, sub, hot, h = "h-[24px]" }: { icon: React.ReactNode; text: string; k: string; tail?: string; dim?: boolean; sub?: boolean; hot?: boolean; h?: string }) {
  return (
    <div className={`flex items-center ${h} ${hot ? "bg-[#fce0d8]" : ""} ${dim ? "text-[#b1b1b1]" : "text-[#444]"}`}>
      <span className="ml-[5px] w-[27px] shrink-0">{icon}</span>
      <span className="whitespace-nowrap leading-[20px]">{text}(<u>{k}</u>){tail}</span>
      {sub && <Svg w={4} h={7} className="ml-auto mr-[10px]"><path d="M0 0v7l4-3.500z" fill={G} stroke="none" /></Svg>}
    </div>
  );
}

const Squares = ({ v }: { v: number }) => (
  <Svg>
    {v === 0 && <><path d="M5 .5H.5V6M10 14.500h4.500V9" stroke="#aaa" /><path d="M3 3h9v9H3z" fill="#d9d4d9" stroke="none" /></>}
    {v === 1 && <><path d="M3 7h5v5H3zM7 3h5v5H7z" fill="#d9d4d9" stroke="none" /><path d="M.5.500h5v5h-5zM9.500 9.500h5v5h-5z" fill="#fff" stroke="#aaa" /></>}
    {v === 2 && <><path d="M1 1h10v10H1z" fill="#d9d4d9" stroke="none" /><path d="M12.500 5.500h2v9h-8V12" stroke="#aaa" /></>}
    {v === 3 && <><path d="M1 1h9v9H1z" fill="#d9d4d9" stroke="none" /><path d="M6.500 6.500h8v8h-8z" fill="#fff" stroke="#aaa" /></>}
  </Svg>
);

const GroupIcon = ({ v }: { v: number }) => {
  const c = v === 1 ? "#555" : "#b5b0b5";
  return (
    <Svg>
      {v === 0 && <><path d="M2 1.500h12M2 14.500h12M1.500 2v12M14.500 2v12" stroke={c} strokeDasharray="3 3" /><path d="M3.500 3.500h7v7h-7zM6.500 6.500h6v6h-6z" stroke={c} /><path d="M0 0h3v3H0zM13 0h3v3h-3zM0 13h3v3H0zM13 13h3v3h-3z" fill={c} stroke="none" /></>}
      {v > 0 && <><path d="M1.500 1.500h9v3M1.500 1.500v8h3" stroke={c} /><path d="M5.500 5.500h9v9h-9z" fill={v === 2 ? "#e4e0e4" : "#fff"} stroke={c} /><path d="M0 0h3v3H0zM9 0h3v3H9zM0 8h3v3H0zM4 4h3v3H4zM13 4h3v3h-3zM4 13h3v3H4zM13 13h3v3h-3z" fill={c} stroke="none" /></>}
      {v === 2 && <><path d="M0 7h6v6H0z" fill="#fff" stroke="none" /><path d="M.5 12c0-3 2-4 5-4M3.500 5.500L6 8l-2.500 2.500" stroke="#999" /></>}
    </Svg>
  );
};

const RotIcon = ({ v }: { v: "r" | "l" | "v" | "h" }) => (
  <Svg>
    {v === "r" && <><path d="M9.500 1.500V14h6.500z" fill="#6b6b6b" stroke="none" /><path d="M1.500 13.500H8V9.500z" stroke="#aaa" /><path d="M3.500 6.500V3.500H7M5.500 1.500l2 2-2 2" stroke={BLUE} strokeWidth="1.100" /></>}
    {v === "l" && <><path d="M6.500 1.500V14H0z" fill="#6b6b6b" stroke="none" /><path d="M14.500 13.500H8V8.500z" stroke="#aaa" /><path d="M12.500 6.500V3.500H9M10.500 1.500l-2 2 2 2" stroke={BLUE} strokeWidth="1.100" /></>}
    {v === "v" && <><path d="M12.500 2v4.500H4z" stroke="#999" /><path d="M2.500 8.500H13V14z" fill="#6b6b6b" stroke="none" /></>}
    {v === "h" && <><path d="M7 3v9.500H1z" fill="#6b6b6b" stroke="none" /><path d="M8.500 3.500v8.500h5z" stroke="#888" /></>}
  </Svg>
);

function Menus() {
  const shell = "absolute border border-[#c0c0c0] bg-white shadow-[2px_2px_3px_rgba(0,0,0,0.18)]";
  return (
    <>
      <div className={`${shell} left-[1076px] top-[122px] h-[315px] w-[130px] pt-px`}>
        <MenuHead>排列对象</MenuHead>
        <MenuItem dim icon={<Squares v={0} />} text="置于顶层" k="R" />
        <MenuItem dim icon={<Squares v={1} />} text="置于底层" k="K" />
        <MenuItem dim icon={<Squares v={2} />} text="上移一层" k="F" />
        <MenuItem dim icon={<Squares v={3} />} text="下移一层" k="B" />
        <MenuHead>组合对象</MenuHead>
        <MenuItem dim icon={<GroupIcon v={0} />} text="组合" k="G" />
        <MenuItem icon={<GroupIcon v={1} />} text="取消组合" k="U" />
        <MenuItem dim icon={<GroupIcon v={2} />} text="重新组合" k="E" />
        <MenuHead>放置对象</MenuHead>
        <MenuItem sub icon={<Svg><path d="M3.500 0v15" /><path d="M5.500 1.500h5v2h-5z" /><path d="M5 5h9v4H5z" fill="#ecc57d" stroke="none" /><path d="M6 12.500h6M8.500 10L6 12.500 8.500 15" stroke={BLUE} strokeWidth="1.200" /></Svg>} text="对齐" k="A" />
        <MenuItem sub hot icon={<RotIcon v="r" />} text="旋转" k="O" />
        <div className="ml-[32px] h-px bg-[#e1e1e1]" />
        <MenuItem h="h-[26px]" icon={<Svg><path d="M6 2h7v8H6z" fill="#ecc57d" stroke="none" /><path d="M7 .5H.5v6H5M.5 9.500h6v5h-6z" /><path d="M9 4v9l2-2 1.500 4 1.500-1-1.500-3.500H15z" fill="#fff" /></Svg>} text="选择窗格" k="P" tail="..." />
      </div>
      <div className={`${shell} left-[1204px] top-[385px] h-[126px] w-[159px] pt-[1px]`}>
        <div className="flex flex-col">
          {([["r", "向右旋转 90°", "R"], ["l", "向左旋转 90°", "L"], ["v", "垂直翻转", "V"], ["h", "水平翻转", "H"]] as const).map(([v, t, k]) => (
            <div key={v} className="flex h-[24px] items-center text-[#444]">
              <span className="ml-[5px] w-[28px] shrink-0"><RotIcon v={v} /></span>
              <span className="whitespace-nowrap leading-[20px] [word-spacing:1px]">{t}(<u>{k}</u>)</span>
            </div>
          ))}
        </div>
        <div className="h-px bg-[#e1e1e1]" />
        <div className="pl-[32px] leading-[25px] text-[#444]">其他旋转选项(<u>M</u>)...</div>
      </div>
    </>
  );
}

/* ---------- annotations and watermark ---------- */

function Arrow({ x1, y1, x2, y2, len = 19, half = 6, width = 3 }: { x1: number; y1: number; x2: number; y2: number; len?: number; half?: number; width?: number }) {
  const d = Math.hypot(x2 - x1, y2 - y1);
  const ux = (x2 - x1) / d;
  const uy = (y2 - y1) / d;
  const bx = x2 - ux * len;
  const by = y2 - uy * len;
  return (
    <g>
      <path d={`M${x1} ${y1}L${bx} ${by}`} stroke="#f00" strokeWidth={width} strokeLinecap="round" />
      <path d={`M${x2} ${y2}L${bx - uy * half} ${by + ux * half}L${bx + uy * half} ${by - ux * half}z`} fill="#f00" />
    </g>
  );
}

function Annotations() {
  const box = "pointer-events-none absolute border-[3px] border-[#ff0000]";
  return (
    <>
      <div className={`${box} left-[44px] top-[24px] h-[41px] w-[91px]`} />
      <div className={`${box} left-[1065px] top-[52px] h-[84px] w-[59px]`} />
      <div className={`${box} left-[1076px] top-[380px] h-[29px] w-[82px]`} />
      <div className={`${box} left-[1220px] top-[384px] h-[28px] w-[112px]`} />
      <svg width="1600" height="859" className="pointer-events-none absolute left-0 top-0">
        <Arrow x1={141} y1={54.500} x2={1056} y2={92.500} />
        <Arrow x1={446.500} y1={464.500} x2={106} y2={82} half={7} />
        <Arrow x1={1113.500} y1={155} x2={1138.500} y2={366} len={17} half={6} width={2.600} />
        <Arrow x1={1165.500} y1={385.500} x2={1214} y2={406.500} len={18} half={6} width={2.600} />
      </svg>
    </>
  );
}

function Watermark() {
  return (
    <svg width="300" height="150" viewBox="1220 680 300 150" className="pointer-events-none absolute left-[1220px] top-[680px]">
      <g fill="#fff" fillOpacity=".7" stroke="#b4b4b4" strokeOpacity=".6" strokeWidth="2.200" paintOrder="stroke" strokeLinejoin="round">
        <text x="1227" y="777" fontSize="66" fontWeight="bold" fontFamily="Liberation Sans" textLength="98" lengthAdjust="spacingAndGlyphs">Bai</text>
        <ellipse cx="1336.500" cy="723" rx="11" ry="14" /><ellipse cx="1357" cy="703" rx="10.500" ry="14.500" />
        <ellipse cx="1382.500" cy="704.500" rx="11" ry="13.500" /><ellipse cx="1398" cy="729.500" rx="11.500" ry="13.500" />
        <path d="M1367 725c-10 0-14 8-18 14-6 8-18 14-17 25 1 13 12 15 19 14 8-1 24-1 32 0s19-1 19-15c0-11-11-15-17-24-4-6-8-14-18-14z" />
        <text x="1343" y="771" fontSize="40" fontWeight="bold" fontFamily="Liberation Sans" textLength="45" lengthAdjust="spacingAndGlyphs">du</text>
        <text x="1411" y="773" fontSize="49" fontWeight="900" textLength="98" lengthAdjust="spacingAndGlyphs">经验</text>
        <text x="1229" y="814" fontSize="34" fontWeight="500" textLength="283" lengthAdjust="spacingAndGlyphs">jingyan.baidu.com</text>
      </g>
    </svg>
  );
}

export default function App() {
  return (
    <div className="relative flex h-[859px] w-[1600px] flex-col overflow-hidden bg-white font-['Noto_Sans','Noto_Sans_CJK_SC',sans-serif] text-[12px]">
      <TitleArea />
      <Ribbon />
      <QuickAccess />
      <DocTabs />
      <Workspace />
      <StatusBar />
      <Menus />
      <Watermark />
      <Annotations />
    </div>
  );
}
